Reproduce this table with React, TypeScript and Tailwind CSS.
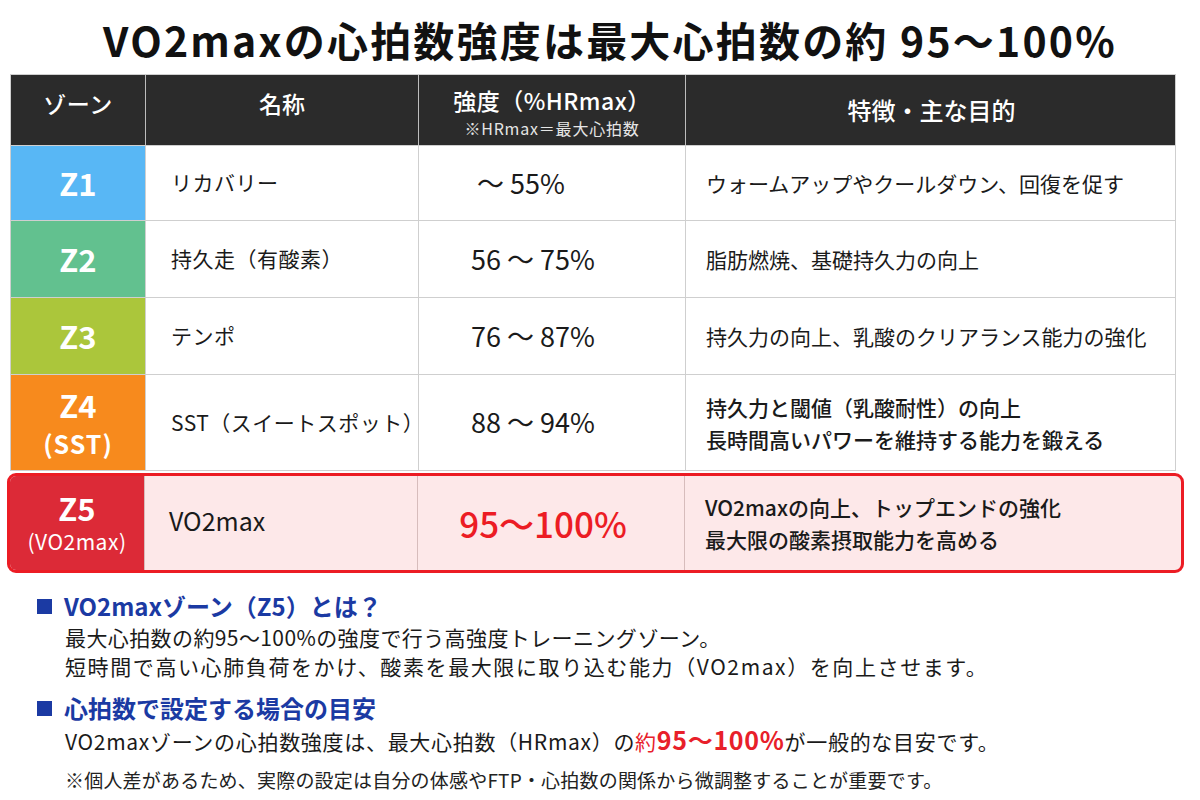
const font = { fontFamily: '"Noto Sans CJK JP", "Noto Sans", sans-serif' };

interface Zone {
    code: string;
    sub?: string;
    color: string;
    name: string;
    range: string;
    purpose: string[];
    height: string;
}

const zones: Zone[] = [
    {
        code: 'Z1',
        color: 'bg-[#58b7f5]',
        name: 'リカバリー',
        range: '\u00a0〜 55%',
        purpose: ['ウォームアップやクールダウン、回復を促す'],
        height: 'h-[75px]',
    },
    {
        code: 'Z2',
        color: 'bg-[#62c18f]',
        name: '持久走（有酸素）',
        range: '56 〜 75%',
        purpose: ['脂肪燃焼、基礎持久力の向上'],
        height: 'h-[77px]',
    },
    {
        code: 'Z3',
        color: 'bg-[#abc63b]',
        name: 'テンポ',
        range: '76 〜 87%',
        purpose: ['持久力の向上、乳酸のクリアランス能力の強化'],
        height: 'h-[77px]',
    },
    {
        code: 'Z4',
        sub: '(SST)',
        color: 'bg-[#f78a1d]',
        name: 'SST（スイートスポット）',
        range: '88 〜 94%',
        purpose: ['持久力と閾値（乳酸耐性）の向上', '長時間高いパワーを維持する能力を鍛える'],
        height: 'h-[96px]',
    },
];

const cols = 'grid grid-cols-[135px_273px_267px_491px]';

const ZoneRow = ({ zone }: { zone: Zone }) => (
    <div className={`${cols} ${zone.height} border-b border-[#cfcfcf]`}>
        <div className={`${zone.color} flex flex-col items-center justify-center text-white font-bold border-r border-[#cfcfcf]`}>
            <span className="text-[31px] leading-[36px]">{zone.code}</span>
            {zone.sub && <span className="text-[25px] leading-[32px] mt-[4px] tracking-[1px]">{zone.sub}</span>}
        </div>
        <div className="flex items-center pl-[25px] text-[21px] text-[#1a1a1a] border-r border-[#cfcfcf] tracking-[0.5px]">
            {zone.name}
        </div>
        <div className="flex items-center pl-[52px] text-[27px] text-[#1a1a1a] border-r border-[#cfcfcf]">{zone.range}</div>
        <div className="flex flex-col justify-center pl-[20px] text-[21px] leading-[32px] text-[#1a1a1a]">
            {zone.purpose.map((line) => (
                <span key={line} className={zone.purpose.length > 1 ? 'font-medium' : ''}>
                    {line}
                </span>
            ))}
        </div>
    </div>
);

const SectionHeading = ({ children }: { children: React.ReactNode }) => (
    <div className="flex items-center gap-[12px] text-[24px] font-bold text-[#1b3aa3] leading-[30px]">
        <span className="w-[15px] h-[15px] bg-[#1b3aa3] shrink-0" />
        <span>{children}</span>
    </div>
);

export default function App() {
    return (
        <div className="w-[1200px] h-[800px] bg-white overflow-hidden" style={font}>
            <h1 className="text-center text-[41px] font-bold text-[#111] leading-[48px] pt-[15px] pl-[20px] tracking-[2.2px]">
                VO2maxの心拍数強度は最大心拍数の約 95〜100%
            </h1>

            <div className="ml-[10px] mt-[11px] w-[1166px]">
                {/* Header */}
                <div className={`${cols} h-[72px] bg-[#2b2b2b] text-white border border-[#cfcfcf]`}>
                    <div className="flex justify-center pt-[11px] text-[23px] font-medium border-r border-[#bdbdbd] tracking-[0.5px]">
                        ゾーン
                    </div>
                    <div className="flex justify-center pt-[11px] text-[23px] font-medium border-r border-[#bdbdbd]">名称</div>
                    <div className="flex flex-col items-center pt-[10px] border-r border-[#bdbdbd]">
                        <span className="text-[23px] font-medium leading-[30px] tracking-[0.5px]">強度（%HRmax）</span>
                        <span className="text-[16px] leading-[26px] text-[#e6e6e6] tracking-[0.8px]">※HRmax＝最大心拍数</span>
                    </div>
                    <div className="flex items-center justify-center text-[24px] font-medium">特徴・主な目的</div>
                </div>

                {/* Rows */}
                <div className="border-x border-[#cfcfcf]">
                    {zones.map((zone) => (
                        <ZoneRow key={zone.code} zone={zone} />
                    ))}
                </div>

                {/* Highlighted Z5 */}
                <div className="-ml-[3px] -mr-[8px] mt-[2px] h-[100px] border-[3px] border-[#ec1c24] rounded-[9px] overflow-hidden bg-[#fde8e9] grid grid-cols-[135px_273px_267px_1fr]">
                    <div className="bg-[#dc2a37] flex flex-col items-center justify-center text-white border-r border-[#d7bcbc]">
                        <span className="text-[31px] font-bold leading-[36px]">Z5</span>
                        <span className="text-[21px] leading-[30px] tracking-[0.5px]">(VO2max)</span>
                    </div>
                    <div className="flex items-center pl-[24px] text-[25px] text-[#1a1a1a] border-r border-[#d7bcbc] pb-[4px]">
                        VO2max
                    </div>
                    <div className="flex items-center justify-center pr-[16px] text-[35px] font-medium text-[#ec1c24] border-r border-[#d7bcbc]">
                        95〜100%
                    </div>
                    <div className="flex flex-col justify-center pl-[20px] text-[21px] leading-[32px] font-medium text-[#1a1a1a]">
                        <span>VO2maxの向上、トップエンドの強化</span>
                        <span>最大限の酸素摂取能力を高める</span>
                    </div>
                </div>
            </div>

            {/* Notes */}
            <div className="pl-[37px] pt-[18px]">
                <SectionHeading>VO2maxゾーン（Z5）とは？</SectionHeading>
                <div className="pl-[28px] pt-[2px] text-[21px] leading-[29px] text-[#1a1a1a]">
                    <p className="tracking-[0.4px]">最大心拍数の約95〜100%の強度で行う高強度トレーニングゾーン。</p>
                    <p className="tracking-[1.6px]">短時間で高い心肺負荷をかけ、酸素を最大限に取り込む能力（VO2max）を向上させます。</p>
                </div>

                <div className="pt-[12px]">
                    <SectionHeading>心拍数で設定する場合の目安</SectionHeading>
                </div>
                <p className="pl-[28px] pt-[0px] text-[21px] leading-[32px] text-[#1a1a1a] tracking-[0.7px]">
                    VO2maxゾーンの心拍数強度は、最大心拍数（HRmax）の
                    <span className="text-[#e8202a]">
                        約<span className="text-[25px] font-bold">95〜100%</span>
                    </span>
                    が一般的な目安です。
                </p>
                <p className="pl-[28px] pt-[10px] text-[19px] leading-[26px] text-[#222] tracking-[0.2px]">
                    ※個人差があるため、実際の設定は自分の体感やFTP・心拍数の関係から微調整することが重要です。
                </p>
            </div>
        </div>
    );
}
